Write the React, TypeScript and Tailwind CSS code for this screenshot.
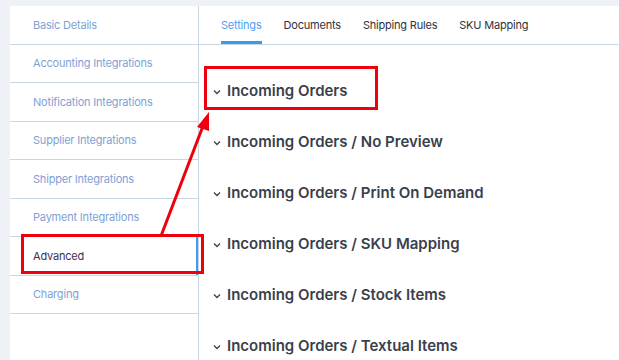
import React from 'react';

const sideItems = [
  'Basic Details',
  'Accounting Integrations',
  'Notification Integrations',
  'Supplier Integrations',
  'Shipper Integrations',
  'Payment Integrations',
  'Advanced',
  'Charging',
];

const tabs = ['Settings', 'Documents', 'Shipping Rules', 'SKU Mapping'];

const sections = [
  'Incoming Orders',
  'Incoming Orders / No Preview',
  'Incoming Orders / Print On Demand',
  'Incoming Orders / SKU Mapping',
  'Incoming Orders / Stock Items',
  'Incoming Orders / Textual Items',
];

function Chevron() {
  return (
    <svg width="8" height="6" viewBox="0 0 8 6" className="shrink-0">
      <polyline points="1,1.5 4,4.5 7,1.5" fill="none" stroke="#3b4150" strokeWidth="1.3" />
    </svg>
  );
}

export default function App() {
  return (
    <div
      className="relative flex w-[619px] h-[360px] overflow-hidden bg-[#eef2f6] pt-[6px] pl-[10px]"
      style={{ fontFamily: 'Inter, "Noto Sans", sans-serif' }}
    >
      {/* sidebar */}
      <div className="w-[189px] shrink-0 bg-white border-r border-[#c9d7e4]">
        {sideItems.map((item) => {
          const active = item === 'Advanced';
          return (
            <div
              key={item}
              className={
                'h-[38.5px] flex items-center pl-[23px] border-b border-[#c9d7e4] text-[11px] tracking-[-0.2px] ' +
                (active
                  ? 'text-[#3a2f55] shadow-[inset_-2px_0_0_#3f9cf0]'
                  : 'text-[#7f9fd4]')
              }
            >
              {item}
            </div>
          );
        })}
      </div>

      {/* main */}
      <div className="flex-1 bg-white">
        <div className="h-[39px] flex items-stretch pl-[22px] gap-[22px] border-b border-[#c9d7e4]">
          {tabs.map((t, i) => (
            <div
              key={t}
              className={
                'flex items-center text-[11px] tracking-[-0.2px] pt-[4px] border-b-[3px] ' +
                (i === 0 ? 'text-[#4f9ef2] border-[#3d9ae8]' : 'text-[#2f3340] border-transparent')
              }
            >
              {t}
            </div>
          ))}
        </div>
        <div className="pt-[21px] pl-[14px]">
          {sections.map((s) => (
            <div key={s} className="h-[51px] flex items-center gap-[6px]">
              <Chevron />
              <span className="text-[15px] font-semibold text-[#3a3f4b]">{s}</span>
            </div>
          ))}
        </div>
      </div>

      {/* annotations */}
      <div className="absolute left-[21px] top-[234px] w-[183px] h-[40px] border-[3px] border-[#f0000c]" />
      <div className="absolute left-[204px] top-[66px] w-[174px] h-[44px] border-[3px] border-[#f0000c]" />
      <svg className="absolute left-0 top-0" width="619" height="360">
        <line x1="161" y1="236" x2="203" y2="126" stroke="#f0000c" strokeWidth="3" />
        <polygon points="209,112 197,127 209,131" fill="#f0000c" />
      </svg>
    </div>
  );
}
